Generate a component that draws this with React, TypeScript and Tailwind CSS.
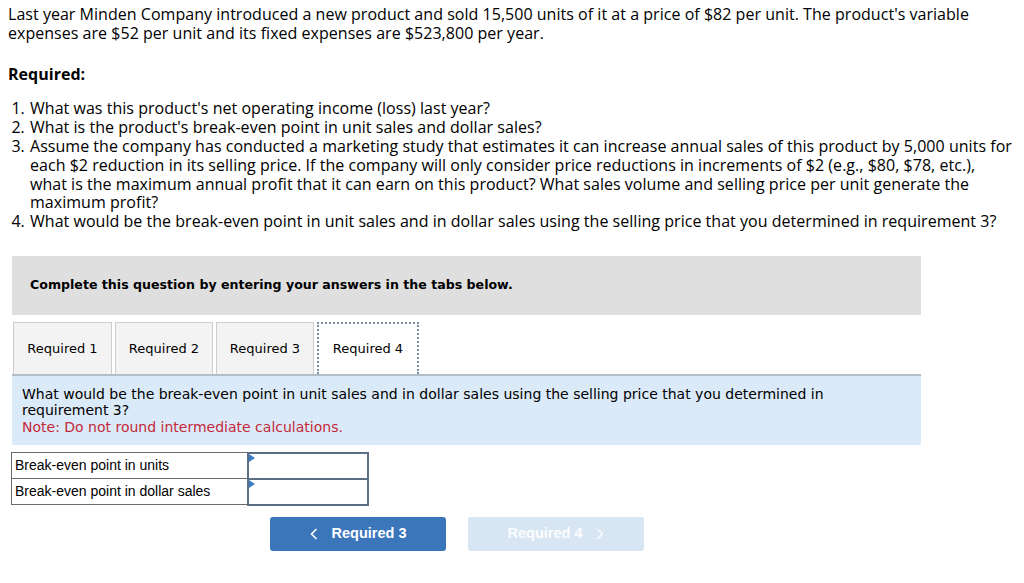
import React from 'react';

const tabs = ['Required 1', 'Required 2', 'Required 3', 'Required 4'];
const tabWidths = ['w-[99px]', 'w-[98px]', 'w-[98px]'];

const questions = [
  "What was this product's net operating income (loss) last year?",
  "What is the product's break-even point in unit sales and dollar sales?",
  'Assume the company has conducted a marketing study that estimates it can increase annual sales of this product by 5,000 units for each $2 reduction in its selling price. If the company will only consider price reductions in increments of $2 (e.g., $80, $78, etc.), what is the maximum annual profit that it can earn on this product? What sales volume and selling price per unit generate the maximum profit?',
  'What would be the break-even point in unit sales and in dollar sales using the selling price that you determined in requirement 3?',
];

const rows = ['Break-even point in units', 'Break-even point in dollar sales'];

const AnswerCell: React.FC = () => (
  <td className="relative w-[120px] border-2 border-[#5b6e87] p-0 h-[26px] bg-white">
    <span className="absolute left-0 top-0 w-0 h-0 border-y-[4px] border-y-transparent border-l-[6px] border-l-[#3b7cc4]" />
  </td>
);

export default function App() {
  return (
    <div className="w-[1024px] min-h-[583px] bg-white text-black">
      {/* problem text */}
      <div className="px-2 pt-[5px] text-[16px] leading-[18.8px] font-['Open_Sans',sans-serif] tracking-[0.03px]">
        <p>
          Last year Minden Company introduced a new product and sold 15,500 units of it at a price of $82 per unit. The
          product's variable expenses are $52 per unit and its fixed expenses are $523,800 per year.
        </p>
        <p className="mt-[22px] font-bold">Required:</p>
        <ol className="mt-[16px] list-decimal pl-[21px]">
          {questions.map((q) => (
            <li key={q} className="pl-[1px]">
              {q}
            </li>
          ))}
        </ol>
      </div>

      {/* instruction bar */}
      <div className="ml-3 mt-[25px] w-[909px] h-[59px] bg-[#dfdfdf] flex items-center pl-[18px] font-['DejaVu_Sans',Verdana,sans-serif] text-[12.6px] font-bold">
        Complete this question by entering your answers in the tabs below.
      </div>

      {/* tabs */}
      <div className="ml-[13px] mt-[7px] flex gap-[3px] font-['DejaVu_Sans',Verdana,sans-serif] text-[13px]">
        {tabs.map((t, i) => (
          <div
            key={t}
            className={
              i === 3
                ? 'h-[52px] w-[102px] flex items-center justify-center bg-white border-2 border-dotted border-[#7d8da1] border-b-0'
                : `h-[52px] ${tabWidths[i]} flex items-center justify-center bg-[#f3f3f3] border border-[#cdcdcd] border-b-0`
            }
          >
            {t}
          </div>
        ))}
      </div>

      {/* question panel */}
      <div className="ml-3 w-[909px] h-[71px] bg-[#dbeaf8] border-t-2 border-[#b4bec8] pl-[10px] pt-[10px] font-['DejaVu_Sans',Verdana,sans-serif] text-[14px] leading-[16.5px]">
        <p className="w-[830px]">
          What would be the break-even point in unit sales and in dollar sales using the selling price that you determined in
          requirement 3?
        </p>
        <p className="text-[#c3283a]">Note: Do not round intermediate calculations.</p>
      </div>

      {/* answer table */}
      <table className="ml-[11px] mt-[7px] border-collapse font-['Liberation_Sans',Arial,sans-serif] text-[14px]">
        <tbody>
          {rows.map((r) => (
            <tr key={r}>
              <td className="w-[236px] h-[26px] border border-[#6c6c6c] px-[3px]">{r}</td>
              <AnswerCell />
            </tr>
          ))}
        </tbody>
      </table>

      {/* navigation */}
      <div className="ml-[270px] mt-[11px] flex gap-[22px] font-['Liberation_Sans',Arial,sans-serif] text-[14.5px] font-bold">
        <button className="w-[176px] h-[34px] rounded-[3px] bg-[#3b76bb] text-white flex items-center justify-center gap-[14px]">
          <svg width="8" height="12" viewBox="0 0 8 12" fill="none" stroke="currentColor" strokeWidth="1.6">
            <path d="M6.5 1 L1.5 6 L6.5 11" />
          </svg>
          Required 3
        </button>
        <button className="w-[176px] h-[34px] rounded-[3px] bg-[#d8e5f3] text-white/90 flex items-center justify-center gap-[14px]">
          Required 4
          <svg width="8" height="12" viewBox="0 0 8 12" fill="none" stroke="currentColor" strokeWidth="1.6">
            <path d="M1.5 1 L6.5 6 L1.5 11" />
          </svg>
        </button>
      </div>
    </div>
  );
}
